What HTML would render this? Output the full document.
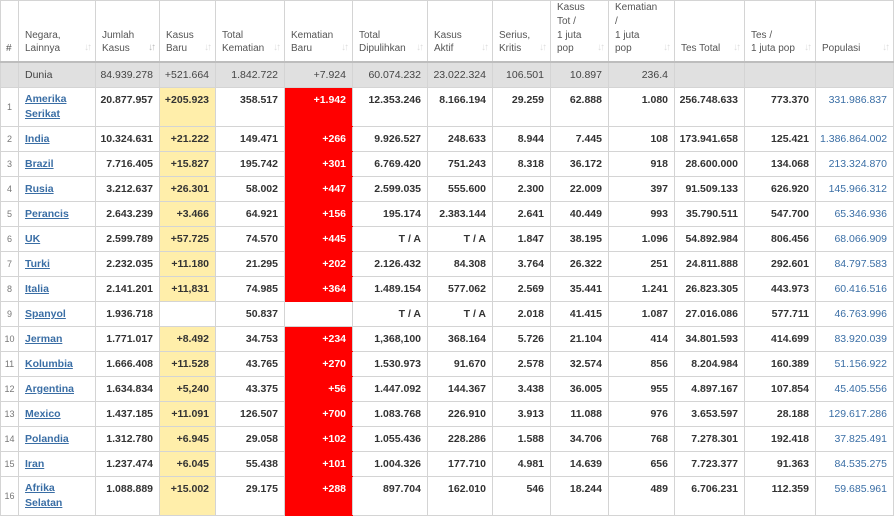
<!DOCTYPE html>
<html><head><meta charset="utf-8"><style>
body{margin:0;background:#fff;width:895px;height:515px;overflow:hidden;font-family:"Liberation Sans",Arial,sans-serif}
table{border-collapse:collapse;table-layout:fixed;width:893px;font-size:10.5px;color:#333}
td,th{border:1px solid #d4d4d4;padding:0 6px 0 4px;white-space:nowrap;overflow:hidden}
th{font-weight:normal;color:#555;text-align:left;vertical-align:bottom;padding:0 4px 5px 6px;line-height:13.7px;height:55px;border-bottom:2px solid #bdbdbd;position:relative;font-size:10px}
th i{position:absolute;right:5px;bottom:6px;color:#ddd;font-style:normal;font-size:10px;letter-spacing:-2px}
th i.a{color:#bbb}
td{text-align:right;font-weight:bold;height:24px;vertical-align:middle}
tr.w td{color:#444;font-weight:normal;background:#e0e0e0;height:24px}
td.n{text-align:center;font-weight:normal;color:#777;font-size:9px;padding:0}
td.c{text-align:left;padding-left:6px}
td.c a{color:#3a6ea5;text-decoration:underline}
td.y{background:#ffeeaa}
td.r{background:#f00;color:#fff;border-color:#f00 #d4d4d4}
td.p{color:#3a6ea5;font-weight:normal}
tr.t td{height:32px;vertical-align:top;padding-top:6px}
tr.t td.n{vertical-align:middle;padding-top:0;height:38px}
tr.t td.c{line-height:15px;padding-top:4px;height:34px}
</style></head><body>
<table>
<colgroup><col style="width:18px"><col style="width:77px"><col style="width:64px"><col style="width:56px"><col style="width:69px"><col style="width:68px"><col style="width:75px"><col style="width:65px"><col style="width:58px"><col style="width:58px"><col style="width:66px"><col style="width:70px"><col style="width:71px"><col style="width:78px"></colgroup>
<tr><th style="padding:0 0 5px 5px">#</th><th>Negara,<br>Lainnya<i>↓↑</i></th><th>Jumlah<br>Kasus<i class="a">↓↑</i></th><th>Kasus<br>Baru<i>↓↑</i></th><th>Total<br>Kematian<i>↓↑</i></th><th>Kematian<br>Baru<i>↓↑</i></th><th>Total<br>Dipulihkan<i>↓↑</i></th><th>Kasus<br>Aktif<i>↓↑</i></th><th>Serius,<br>Kritis<i>↓↑</i></th><th>Kasus<br>Tot /<br>1 juta<br>pop<i>↓↑</i></th><th>Kematian<br>/<br>1 juta<br>pop<i>↓↑</i></th><th>Tes Total<i>↓↑</i></th><th>Tes /<br>1 juta pop<i>↓↑</i></th><th>Populasi<i>↓↑</i></th></tr>
<tr class="w"><td></td><td style="text-align:left;padding-left:6px">Dunia</td><td>84.939.278</td><td>+521.664</td><td>1.842.722</td><td>+7.924</td><td>60.074.232</td><td>23.022.324</td><td>106.501</td><td>10.897</td><td>236.4</td><td></td><td></td><td></td></tr>
<tr class="t"><td class="n">1</td><td class="c"><a>Amerika<br>Serikat</a></td><td>20.877.957</td><td class="y">+205.923</td><td>358.517</td><td class="r">+1.942</td><td>12.353.246</td><td>8.166.194</td><td>29.259</td><td>62.888</td><td>1.080</td><td>256.748.633</td><td>773.370</td><td class="p">331.986.837</td></tr>
<tr><td class="n">2</td><td class="c"><a>India</a></td><td>10.324.631</td><td class="y">+21.222</td><td>149.471</td><td class="r">+266</td><td>9.926.527</td><td>248.633</td><td>8.944</td><td>7.445</td><td>108</td><td>173.941.658</td><td>125.421</td><td class="p">1.386.864.002</td></tr>
<tr><td class="n">3</td><td class="c"><a>Brazil</a></td><td>7.716.405</td><td class="y">+15.827</td><td>195.742</td><td class="r">+301</td><td>6.769.420</td><td>751.243</td><td>8.318</td><td>36.172</td><td>918</td><td>28.600.000</td><td>134.068</td><td class="p">213.324.870</td></tr>
<tr><td class="n">4</td><td class="c"><a>Rusia</a></td><td>3.212.637</td><td class="y">+26.301</td><td>58.002</td><td class="r">+447</td><td>2.599.035</td><td>555.600</td><td>2.300</td><td>22.009</td><td>397</td><td>91.509.133</td><td>626.920</td><td class="p">145.966.312</td></tr>
<tr><td class="n">5</td><td class="c"><a>Perancis</a></td><td>2.643.239</td><td class="y">+3.466</td><td>64.921</td><td class="r">+156</td><td>195.174</td><td>2.383.144</td><td>2.641</td><td>40.449</td><td>993</td><td>35.790.511</td><td>547.700</td><td class="p">65.346.936</td></tr>
<tr><td class="n">6</td><td class="c"><a>UK</a></td><td>2.599.789</td><td class="y">+57.725</td><td>74.570</td><td class="r">+445</td><td>T / A</td><td>T / A</td><td>1.847</td><td>38.195</td><td>1.096</td><td>54.892.984</td><td>806.456</td><td class="p">68.066.909</td></tr>
<tr><td class="n">7</td><td class="c"><a>Turki</a></td><td>2.232.035</td><td class="y">+11.180</td><td>21.295</td><td class="r">+202</td><td>2.126.432</td><td>84.308</td><td>3.764</td><td>26.322</td><td>251</td><td>24.811.888</td><td>292.601</td><td class="p">84.797.583</td></tr>
<tr><td class="n">8</td><td class="c"><a>Italia</a></td><td>2.141.201</td><td class="y">+11,831</td><td>74.985</td><td class="r">+364</td><td>1.489.154</td><td>577.062</td><td>2.569</td><td>35.441</td><td>1.241</td><td>26.823.305</td><td>443.973</td><td class="p">60.416.516</td></tr>
<tr><td class="n">9</td><td class="c"><a>Spanyol</a></td><td>1.936.718</td><td></td><td>50.837</td><td></td><td>T / A</td><td>T / A</td><td>2.018</td><td>41.415</td><td>1.087</td><td>27.016.086</td><td>577.711</td><td class="p">46.763.996</td></tr>
<tr><td class="n">10</td><td class="c"><a>Jerman</a></td><td>1.771.017</td><td class="y">+8.492</td><td>34.753</td><td class="r">+234</td><td>1,368,100</td><td>368.164</td><td>5.726</td><td>21.104</td><td>414</td><td>34.801.593</td><td>414.699</td><td class="p">83.920.039</td></tr>
<tr><td class="n">11</td><td class="c"><a>Kolumbia</a></td><td>1.666.408</td><td class="y">+11.528</td><td>43.765</td><td class="r">+270</td><td>1.530.973</td><td>91.670</td><td>2.578</td><td>32.574</td><td>856</td><td>8.204.984</td><td>160.389</td><td class="p">51.156.922</td></tr>
<tr><td class="n">12</td><td class="c"><a>Argentina</a></td><td>1.634.834</td><td class="y">+5,240</td><td>43.375</td><td class="r">+56</td><td>1.447.092</td><td>144.367</td><td>3.438</td><td>36.005</td><td>955</td><td>4.897.167</td><td>107.854</td><td class="p">45.405.556</td></tr>
<tr><td class="n">13</td><td class="c"><a>Mexico</a></td><td>1.437.185</td><td class="y">+11.091</td><td>126.507</td><td class="r">+700</td><td>1.083.768</td><td>226.910</td><td>3.913</td><td>11.088</td><td>976</td><td>3.653.597</td><td>28.188</td><td class="p">129.617.286</td></tr>
<tr><td class="n">14</td><td class="c"><a>Polandia</a></td><td>1.312.780</td><td class="y">+6.945</td><td>29.058</td><td class="r">+102</td><td>1.055.436</td><td>228.286</td><td>1.588</td><td>34.706</td><td>768</td><td>7.278.301</td><td>192.418</td><td class="p">37.825.491</td></tr>
<tr><td class="n">15</td><td class="c"><a>Iran</a></td><td>1.237.474</td><td class="y">+6.045</td><td>55.438</td><td class="r">+101</td><td>1.004.326</td><td>177.710</td><td>4.981</td><td>14.639</td><td>656</td><td>7.723.377</td><td>91.363</td><td class="p">84.535.275</td></tr>
<tr class="t"><td class="n">16</td><td class="c"><a>Afrika<br>Selatan</a></td><td>1.088.889</td><td class="y">+15.002</td><td>29.175</td><td class="r">+288</td><td>897.704</td><td>162.010</td><td>546</td><td>18.244</td><td>489</td><td>6.706.231</td><td>112.359</td><td class="p">59.685.961</td></tr>
</table>
</body></html>
